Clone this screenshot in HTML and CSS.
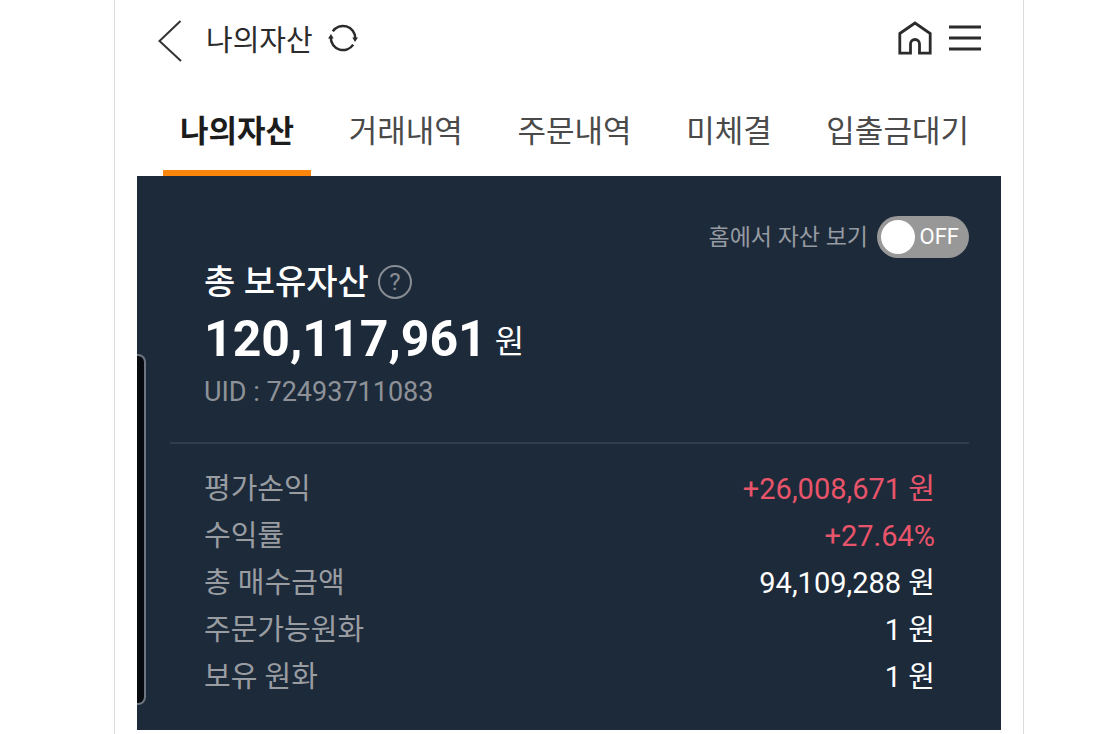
FILE: index.html
```
<!DOCTYPE html>
<html lang="ko">
<head>
    <meta charset="UTF-8">
    <meta name="viewport" content="width=device-width, initial-scale=1.0">
    <title>나의자산</title>
    <link rel="stylesheet" href="styles.css">
</head>
<body>
    <div class="app">
        <header class="header">
            <button type="button" class="icon-button back" aria-label="뒤로">
                <svg width="24" height="42" viewBox="0 0 24 42" fill="none" stroke="#333" stroke-width="2"><path d="M22.5 1 1.5 21 23 41"/></svg>
            </button>
            <h1>나의자산</h1>
            <button type="button" class="icon-button refresh" aria-label="새로고침">
                <svg width="30" height="30" viewBox="0 0 30 30" fill="none" stroke="#2b2b2b" stroke-width="2.5">
                    <path d="M4.800 8.400A12.200 12.200 0 0 1 27.200 15M25.200 21.600A12.200 12.200 0 0 1 2.800 15"/>
                    <path d="M24.300 14.500H30L27 19zM0 15.500h5.700L3 11z" fill="#2b2b2b" stroke="none"/>
                </svg>
            </button>
            <button type="button" class="icon-button home" aria-label="홈">
                <svg width="34" height="34" viewBox="0 0 34 34" fill="none" stroke="#2b2b2b" stroke-width="2.8"><path d="M1.800 12.500 17 2l15.200 10.500v19.700H21.500v-9.200a4.500 4.500 0 0 0-9 0v9.200H1.800z"/></svg>
            </button>
            <button type="button" class="icon-button menu" aria-label="메뉴">
                <svg width="32" height="28" viewBox="0 0 32 28" stroke="#2b2b2b" stroke-width="3"><path d="M0 3h32M0 14h32M0 25h32"/></svg>
            </button>
        </header>

        <nav class="tabs">
            <a href="#" class="active">나의자산</a>
            <a href="#">거래내역</a>
            <a href="#">주문내역</a>
            <a href="#">미체결</a>
            <a href="#">입출금대기</a>
        </nav>

        <main class="panel">
            <div class="edge-handle"></div>
            <div class="home-toggle">
                <label for="showOnHome">홈에서 자산 보기</label>
                <span class="switch">
                    <input type="checkbox" id="showOnHome">
                    <span class="switch-text">OFF</span>
                </span>
            </div>

            <section class="total">
                <div class="total-title">
                    <h2>총 보유자산</h2>
                    <button type="button" class="help" aria-label="도움말">?</button>
                </div>
                <p class="amount"><strong>120,117,961</strong><span>원</span></p>
                <p class="uid">UID : 72493711083</p>
            </section>

            <table class="summary">
                <tr>
                    <th scope="row">평가손익</th>
                    <td class="up">+26,008,671 원</td>
                </tr>
                <tr>
                    <th scope="row">수익률</th>
                    <td class="up">+27.64%</td>
                </tr>
                <tr>
                    <th scope="row">총 매수금액</th>
                    <td>94,109,288 원</td>
                </tr>
                <tr>
                    <th scope="row">주문가능원화</th>
                    <td>1 원</td>
                </tr>
                <tr>
                    <th scope="row">보유 원화</th>
                    <td>1 원</td>
                </tr>
            </table>
        </main>
    </div>
</body>
</html>
```

FILE: styles.css
```
* {
    box-sizing: border-box;
}
body {
    margin: 0;
    background: white;
    font-family: Roboto, "Noto Sans CJK KR", sans-serif;
}
h1, h2, p {
    margin: 0;
}
button {
    padding: 0;
    border: none;
    background: none;
    font-family: inherit;
    cursor: pointer;
}
.app {
    min-height: 100vh;
    margin: 0 86px 0 114px;
    padding: 0 22px;
    border-left: 1px solid #dcdcdc;
    border-right: 1px solid #dcdcdc;
}

/* header */
.header {
    display: flex;
    align-items: center;
    height: 82px;
    padding: 0 20px 0 21px;
}
.header h1 {
    margin: 0 15px 0 24px;
    font-size: 29px;
    font-weight: 400;
    line-height: 48px;
    color: #2b2b2b;
}
.icon-button svg {
    display: block;
}
.refresh, .home, .menu {
    margin-bottom: 6px;
}
.home {
    margin-left: auto;
    margin-right: 17px;
}

/* tabs */
.tabs {
    display: flex;
    justify-content: space-between;
    padding: 0 15px 0 26px;
}
.tabs a {
    padding: 26px 17px 14px;
    border-bottom: 6px solid transparent;
    font-size: 31px;
    line-height: 48px;
    color: #4a4a4a;
    text-decoration: none;
    white-space: nowrap;
}
.tabs .active {
    border-bottom-color: #fa860e;
    font-weight: 700;
    color: #1c1c1c;
}

/* asset panel */
.panel {
    position: relative;
    padding: 40px 32px 29px 33px;
    background: #1d2a3a;
    color: white;
}
.edge-handle {
    position: absolute;
    top: 178px;
    left: 0;
    width: 9px;
    height: 351px;
    border: 2px solid #6d7680;
    border-left: none;
    border-radius: 0 8px 8px 0;
    background: #070b10;
}
.home-toggle {
    display: flex;
    justify-content: flex-end;
    align-items: center;
    gap: 9px;
    font-size: 23px;
    color: #969ba2;
}
.home-toggle label {
    padding-bottom: 4px;
}
.switch {
    position: relative;
    width: 92px;
    height: 42px;
}
.switch input {
    width: 100%;
    height: 100%;
    margin: 0;
    padding: 4px;
    border-radius: 21px;
    background: #989898;
    appearance: none;
    cursor: pointer;
}
.switch input::before {
    content: "";
    display: block;
    width: 34px;
    height: 34px;
    border-radius: 50%;
    background: white;
}
.switch-text {
    position: absolute;
    top: 0;
    right: 10px;
    font-size: 22px;
    line-height: 42px;
    color: white;
    pointer-events: none;
}
.total {
    padding: 0 34px 30px;
    border-bottom: 2px solid #2f3d4c;
}
.total-title {
    display: flex;
    align-items: center;
    gap: 9px;
}
.total-title h2 {
    font-size: 34px;
    font-weight: 500;
    line-height: 48px;
}
.help {
    width: 34px;
    height: 34px;
    border: 2px solid #888d94;
    border-radius: 50%;
    font-size: 24px;
    line-height: 30px;
    color: #888d94;
}
.amount {
    display: flex;
    align-items: center;
    gap: 8px;
    font-size: 32px;
    line-height: 40px;
}
.amount strong {
    font-size: 50px;
    line-height: 66px;
}
.amount span {
    padding-top: 6px;
}
.uid {
    font-size: 27px;
    line-height: 40px;
    color: #8e9298;
}
.summary {
    width: 100%;
    margin-top: 22px;
    border-collapse: collapse;
    font-size: 29px;
    line-height: 47px;
}
.summary th, .summary td {
    padding: 0 34px;
    font-weight: 400;
}
.summary th {
    text-align: left;
    color: #999da2;
}
.summary td {
    text-align: right;
}
.summary .up {
    color: #e8546a;
}
```
